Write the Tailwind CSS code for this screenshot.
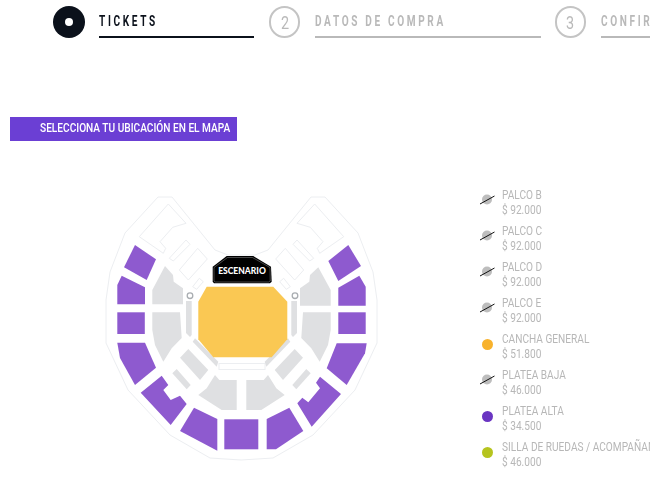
<!DOCTYPE html>
<html lang="es">
<head>
    <meta charset="UTF-8">
    <meta name="viewport" content="width=device-width, initial-scale=1.0">
    <title>Tickets</title>
    <script src="https://cdn.jsdelivr.net/npm/@tailwindcss/browser@4"></script>
</head>
<body class="bg-white w-[650px] h-[487px] overflow-hidden font-['Roboto',sans-serif]">
    <!-- pasos -->
    <div class="flex pl-[53px] pt-[6px] w-[800px]">
        <div class="w-8 h-8 rounded-full bg-[#0b111b] flex items-center justify-center shrink-0">
            <div class="w-[8px] h-[8px] rounded-full bg-white"></div>
        </div>
        <div class="ml-[14px] w-[156px] h-8 border-b-2 border-[#0b111b]">
            <p class="origin-left scale-x-[.72] text-[14px] leading-[31px] font-bold tracking-[3.7px] text-[#0b111b] whitespace-nowrap">TICKETS</p>
        </div>
        <div class="ml-[15px] w-[31px] h-8 rounded-full border-2 border-[#c4c4c4] flex items-center justify-center text-[#b9b9b9] text-[18px] shrink-0"><span class="inline-block scale-x-[.8]">2</span></div>
        <div class="ml-[15px] w-[227px] h-8 border-b-2 border-[#b9b9b9]">
            <p class="origin-left scale-x-[.72] text-[14px] leading-[31px] font-bold tracking-[3.67px] text-[#b9b9b9] whitespace-nowrap">DATOS DE COMPRA</p>
        </div>
        <div class="ml-[14px] w-[31px] h-8 rounded-full border-2 border-[#c4c4c4] flex items-center justify-center text-[#b9b9b9] text-[18px] shrink-0"><span class="inline-block scale-x-[.8]">3</span></div>
        <div class="ml-[15px] w-[200px] h-8 border-b-2 border-[#b9b9b9]">
            <p class="origin-left scale-x-[.72] text-[14px] leading-[31px] font-bold tracking-[3.67px] text-[#b9b9b9] whitespace-nowrap">CONFIRMACIÓN</p>
        </div>
    </div>

    <!-- titulo -->
    <div class="ml-[10px] mt-[79px] w-[227px] h-[24px] bg-[#6b3fd4] pl-[30px] text-white text-[12.5px] leading-[22px] font-medium whitespace-nowrap overflow-hidden"><span class="inline-block origin-left scale-x-[.81]">SELECCIONA TU UBICACIÓN EN EL MAPA</span></div>

    <div class="flex mt-[49px] ml-[100px]">
        <!-- mapa -->
        <svg class="w-[290px] h-[280px] shrink-0" viewBox="100 190 290 280">
            <g fill="none" stroke="#eceef1" stroke-width="1">
                <path fill="#fff" d="M158 197L172 197L215 250L228 255L255 255L268 250L311 197L325 197L358 233L373 272L377 300L377 343L355 390L313 435L273 458L241 460L210 458L170 435L128 390L106 343L106 300L110 272L125 233Z"/>
                <path d="M139.300 236.700L168.300 204L186 223.300L172.700 227.300L160 241.700L165.700 248.300L163.300 253.300Z"/>
                <path d="M169.300 258.300L186 240L190 244.300L173.300 261Z"/>
                <path d="M197.700 248.300L207.300 259L188.300 280L179.300 270Z"/>
                <path d="M192.700 286.700L199.300 278.300L203.300 281.700L196.700 289.300Z"/>
                <path d="M343.700 236.700L314.700 204L297 223.300L310.300 227.300L323 241.700L317.300 248.300L319.700 253.300Z"/>
                <path d="M313.700 258.300L297 240L293 244.300L309.700 261Z"/>
                <path d="M285.300 248.300L275.700 259L294.700 280L303.700 270Z"/>
                <path d="M290.300 286.700L283.700 278.300L279.700 281.700L286.300 289.300Z"/>
                <rect x="219" y="363.500" width="46" height="6"/>
            </g>

            <g fill="#dfe0e2">
                <path d="M165 266L173 275L173.700 281.700L183 288.300L183 304.300L152.300 304.300L152.300 290Z"/>
                <path d="M152.300 312.300L180 312.300L181.700 338L171.700 348.300L163.300 361.700L155 345L152.300 330Z"/>
                <path d="M186 301H191.700V335L190 337L186 333Z"/>
                <path d="M195 338.300L218.300 361.700L216.700 366.700L192.700 341.700Z"/>
                <path d="M188.300 349L208.300 370L200 380L180 357.700Z"/>
                <path d="M176.700 369L190.700 385L186.700 389.300L172.300 373.300Z"/>
                <path d="M215 375L219.300 380L236.700 380L236.700 410L221.700 410L198.300 395L206.700 388.300Z"/>
                <path d="M318.300 267.300L310 275L309.300 281.700L300 288.300L300 305.700L330.700 305.700L330.700 290Z"/>
                <path d="M330.700 312.300L303 312.300L301.300 338L311.300 348.300L319.700 361.700L328 345L330.700 330Z"/>
                <path d="M297 301H291.300V335L293 337L297 333Z"/>
                <path d="M288 338.300L264.700 361.700L266.300 366.700L290.300 341.700Z"/>
                <path d="M294.700 349L274.700 370L283 380L303 357.700Z"/>
                <path d="M306.300 369L292.300 385L296.300 389.300L310.700 373.300Z"/>
                <path d="M268 375L263.700 380L246.300 380L246.300 410L261.300 410L284.700 395L276.300 388.300Z"/>
            </g>

            <g fill="#8e5acf">
                <path d="M135 245L156 259.300L146.700 280L124 267.300Z"/>
                <path d="M121.700 275.700L145 287.300L145 304.300L117.300 304.300L117.300 285Z"/>
                <rect x="117.300" y="312.300" width="27.500" height="21.700"/>
                <path d="M117.300 342.700L145 342.700L156 367.700L135 385L120 358Z"/>
                <path d="M140.700 392.700L161.700 375.700L168.300 385L163.300 390L170.700 400L180 395.700L186.700 404L170.700 425Z"/>
                <path d="M194 407.700L217.300 419L217.300 450.700L180 431Z"/>
                <rect x="224.300" y="419.300" width="34" height="30"/>
                <path d="M289.300 407.700L303.300 431L276 449.300L266.700 449.300L266.700 419Z"/>
                <path d="M320 376.700L341 394L311.700 426.700L297.300 403.300L302.300 397.700L308.300 402.300L320 388.300L316 382.700Z"/>
                <path d="M336.700 343.300L366.700 343.300L365 353.300L346.700 385L326.700 368.300Z"/>
                <rect x="338.300" y="312.300" width="27.400" height="21.700"/>
                <path d="M359.300 275.700L365.700 286.700L365.700 305.700L338.300 305.700L338.300 287.700Z"/>
                <path d="M348.300 245L361 266L338.300 281L328.300 261Z"/>
            </g>

            <path fill="#fac853" d="M206.700 286.700L273.300 286.700L287.300 301.700L287.300 339.300L271.700 357.300L213.300 357.300L198.300 339.300L198.300 301.700Z"/>
            <path fill="#000" d="M226.700 256L253.300 256L271 266.700L271.700 281.700L270 283.300L214 283.300L212.700 281.700L212.700 266.700Z"/>
            <path fill="none" stroke="#fff" stroke-opacity=".55" stroke-width=".5" d="M227.500 257.500L252.500 257.500L270 267.500L270.200 281L269 282L215 282L214 281L214 267.500Z"/>
            <text x="242" y="274" text-anchor="middle" fill="#fff" font-family="Lato, sans-serif" font-weight="900" font-size="8.500">ESCENARIO</text>
            <circle cx="190" cy="295.700" r="2.800" fill="#fff" stroke="#a9adb1" stroke-width="1.300"/>
            <circle cx="295" cy="295.700" r="2.800" fill="#fff" stroke="#a9adb1" stroke-width="1.300"/>
        </svg>

        <!-- leyenda -->
        <ul class="ml-[90px] -mt-[2px] text-[#b7b7b7] text-[12.5px] leading-[14.5px] whitespace-nowrap">
            <li class="flex h-[36px]">
                <svg class="w-[15px] h-[14px] mt-[5px] mr-[7px] shrink-0" viewBox="0 0 15 14"><circle class="blur-[0.6px]" cx="7" cy="6.500" r="5" fill="#bdbdbd"/><path d="M0 11L14.500 3" stroke="#111" stroke-width="1"/></svg>
                <div class="origin-left scale-x-[.81]"><p>PALCO B</p><p>$ 92.000</p></div>
            </li>
            <li class="flex h-[36px]">
                <svg class="w-[15px] h-[14px] mt-[5px] mr-[7px] shrink-0" viewBox="0 0 15 14"><circle class="blur-[0.6px]" cx="7" cy="6.500" r="5" fill="#bdbdbd"/><path d="M0 11L14.500 3" stroke="#111" stroke-width="1"/></svg>
                <div class="origin-left scale-x-[.81]"><p>PALCO C</p><p>$ 92.000</p></div>
            </li>
            <li class="flex h-[36px]">
                <svg class="w-[15px] h-[14px] mt-[5px] mr-[7px] shrink-0" viewBox="0 0 15 14"><circle class="blur-[0.6px]" cx="7" cy="6.500" r="5" fill="#bdbdbd"/><path d="M0 11L14.500 3" stroke="#111" stroke-width="1"/></svg>
                <div class="origin-left scale-x-[.81]"><p>PALCO D</p><p>$ 92.000</p></div>
            </li>
            <li class="flex h-[36px]">
                <svg class="w-[15px] h-[14px] mt-[5px] mr-[7px] shrink-0" viewBox="0 0 15 14"><circle class="blur-[0.6px]" cx="7" cy="6.500" r="5" fill="#bdbdbd"/><path d="M0 11L14.500 3" stroke="#111" stroke-width="1"/></svg>
                <div class="origin-left scale-x-[.81]"><p>PALCO E</p><p>$ 92.000</p></div>
            </li>
            <li class="flex h-[36px]">
                <div class="w-[11px] h-[11px] rounded-full bg-[#f8b22c] mt-[7px] ml-[2px] mr-[9px] shrink-0"></div>
                <div class="origin-left scale-x-[.81]"><p>CANCHA GENERAL</p><p>$ 51.800</p></div>
            </li>
            <li class="flex h-[36px]">
                <svg class="w-[15px] h-[14px] mt-[5px] mr-[7px] shrink-0" viewBox="0 0 15 14"><circle class="blur-[0.6px]" cx="7" cy="6.500" r="5" fill="#bdbdbd"/><path d="M0 11L14.500 3" stroke="#111" stroke-width="1"/></svg>
                <div class="origin-left scale-x-[.81]"><p>PLATEA BAJA</p><p>$ 46.000</p></div>
            </li>
            <li class="flex h-[36px]">
                <div class="w-[11px] h-[11px] rounded-full bg-[#6a35c2] mt-[7px] ml-[2px] mr-[9px] shrink-0"></div>
                <div class="origin-left scale-x-[.81]"><p>PLATEA ALTA</p><p>$ 34.500</p></div>
            </li>
            <li class="flex h-[36px]">
                <div class="w-[11px] h-[11px] rounded-full bg-[#b6c41e] mt-[7px] ml-[2px] mr-[9px] shrink-0"></div>
                <div class="origin-left scale-x-[.81]"><p>SILLA DE RUEDAS / ACOMPAÑANTE</p><p>$ 46.000</p></div>
            </li>
        </ul>
    </div>
</body>
</html>
